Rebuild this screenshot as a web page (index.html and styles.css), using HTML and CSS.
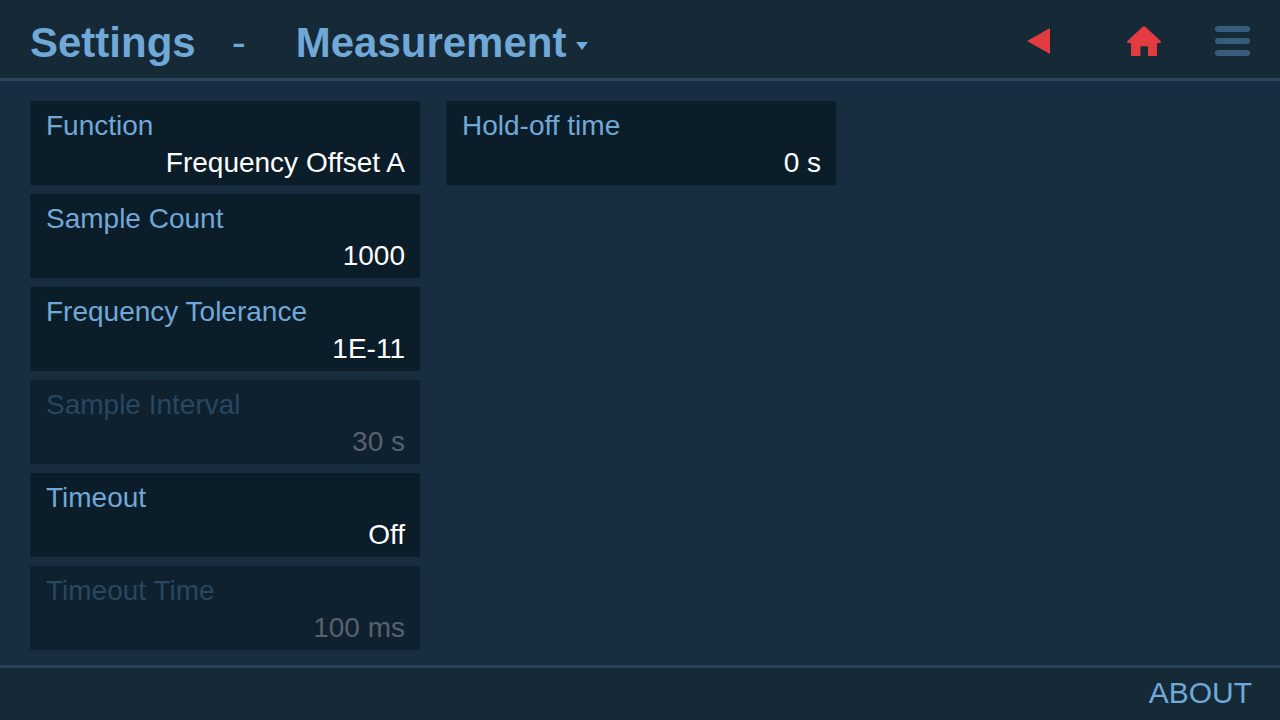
FILE: index.html
```html
<!DOCTYPE html>
<html lang="en">
<head>
<meta charset="utf-8">
<title>Settings - Measurement</title>
<link rel="stylesheet" href="styles.css">
</head>
<body>
<header class="topbar">
  <h1 class="title">Settings</h1>
  <span class="dash">-</span>
  <button class="section" type="button">Measurement<svg class="caret" viewBox="0 0 12 8"><path d="M0 0h12L6 8z"/></svg></button>
  <nav class="actions">
    <button class="icon back" type="button" aria-label="Back"><svg width="24" height="28" viewBox="0 0 24 28"><path d="M24 1v26L1 14z"/></svg></button>
    <button class="icon home" type="button" aria-label="Home"><svg width="36" height="32" viewBox="0 0 36 32"><path d="M17 1.500Q18 0.600 19 1.500L34.700 16Q35.500 17.500 34 18H31V30Q31 31 30 31H23Q22 31 22 30V22Q22 21.300 21.300 21.300H15.200Q14.500 21.300 14.500 22V30Q14.500 31 13.500 31H6Q5 31 5 30V18H2Q0.500 17.500 1.300 16Z"/></svg></button>
    <button class="icon menu" type="button" aria-label="Menu"><svg width="35" height="30" viewBox="0 0 35 30"><rect width="35" height="6" rx="3"/><rect y="12" width="35" height="6" rx="3"/><rect y="24" width="35" height="6" rx="3"/></svg></button>
  </nav>
</header>
<main class="settings">
  <div class="column">
    <button class="card" type="button"><span class="label">Function</span><span class="value">Frequency Offset A</span></button>
    <button class="card" type="button"><span class="label">Sample Count</span><span class="value">1000</span></button>
    <button class="card" type="button"><span class="label">Frequency Tolerance</span><span class="value">1E-11</span></button>
    <button class="card" type="button" disabled><span class="label">Sample Interval</span><span class="value">30 s</span></button>
    <button class="card" type="button"><span class="label">Timeout</span><span class="value">Off</span></button>
    <button class="card" type="button" disabled><span class="label">Timeout Time</span><span class="value">100 ms</span></button>
  </div>
  <div class="column">
    <button class="card" type="button"><span class="label">Hold-off time</span><span class="value">0 s</span></button>
  </div>
</main>
<footer class="bottombar"><button class="about" type="button">ABOUT</button></footer>
</body>
</html>
```
FILE: styles.css
```css
* { box-sizing: border-box; }
body {
  margin: 0;
  min-height: 100vh;
  display: flex;
  flex-direction: column;
  background: #192d41;
  color: #70a8d8;
  font-family: "Nimbus Sans", "Liberation Sans", Arial, sans-serif;
}
button {
  margin: 0;
  padding: 0;
  border: 0;
  background: none;
  color: inherit;
  font: inherit;
}
.topbar {
  display: flex;
  align-items: center;
  padding: 4px 30px 0;
  height: 81px;
  background: #162937;
  border-bottom: 3px solid #28455b;
}
.title, .section, .dash {
  margin: 0;
  padding-top: 4px;
  font-size: 42px;
  font-weight: bold;
  line-height: 48px;
}
.dash { margin: 0 50px 0 36px; font-weight: normal; }
.section { display: flex; align-items: center; gap: 10px; }
.caret { width: 12px; height: 8px; margin-top: 6px; fill: #70a8d8; }
.actions { display: flex; align-items: center; margin-left: auto; }
.icon { display: flex; fill: #e23b40; }
.home { margin: 0 53px 0 76px; }
.menu { fill: #385c7c; }
.settings {
  flex: 1;
  display: flex;
  gap: 26px;
  padding: 20px 30px 15px;
}
.column { display: flex; flex-direction: column; gap: 9px; flex: 0 1 390px; }
.card {
  display: flex;
  flex-direction: column;
  padding: 6px 15px 4px 16px;
  background: #0b1d29;
  font-size: 28px;
  line-height: 37px;
  text-align: left;
}
.value { align-self: flex-end; color: #fff; }
.card:disabled { background: #0f202f; color: #284761; }
.card:disabled .value { color: #56626d; }
.bottombar {
  display: flex;
  justify-content: flex-end;
  align-items: center;
  height: 55px;
  padding: 0 28px 2px;
  background: #162937;
  border-top: 3px solid #28455b;
}
.about { font-size: 30px; line-height: 34px; }
```
